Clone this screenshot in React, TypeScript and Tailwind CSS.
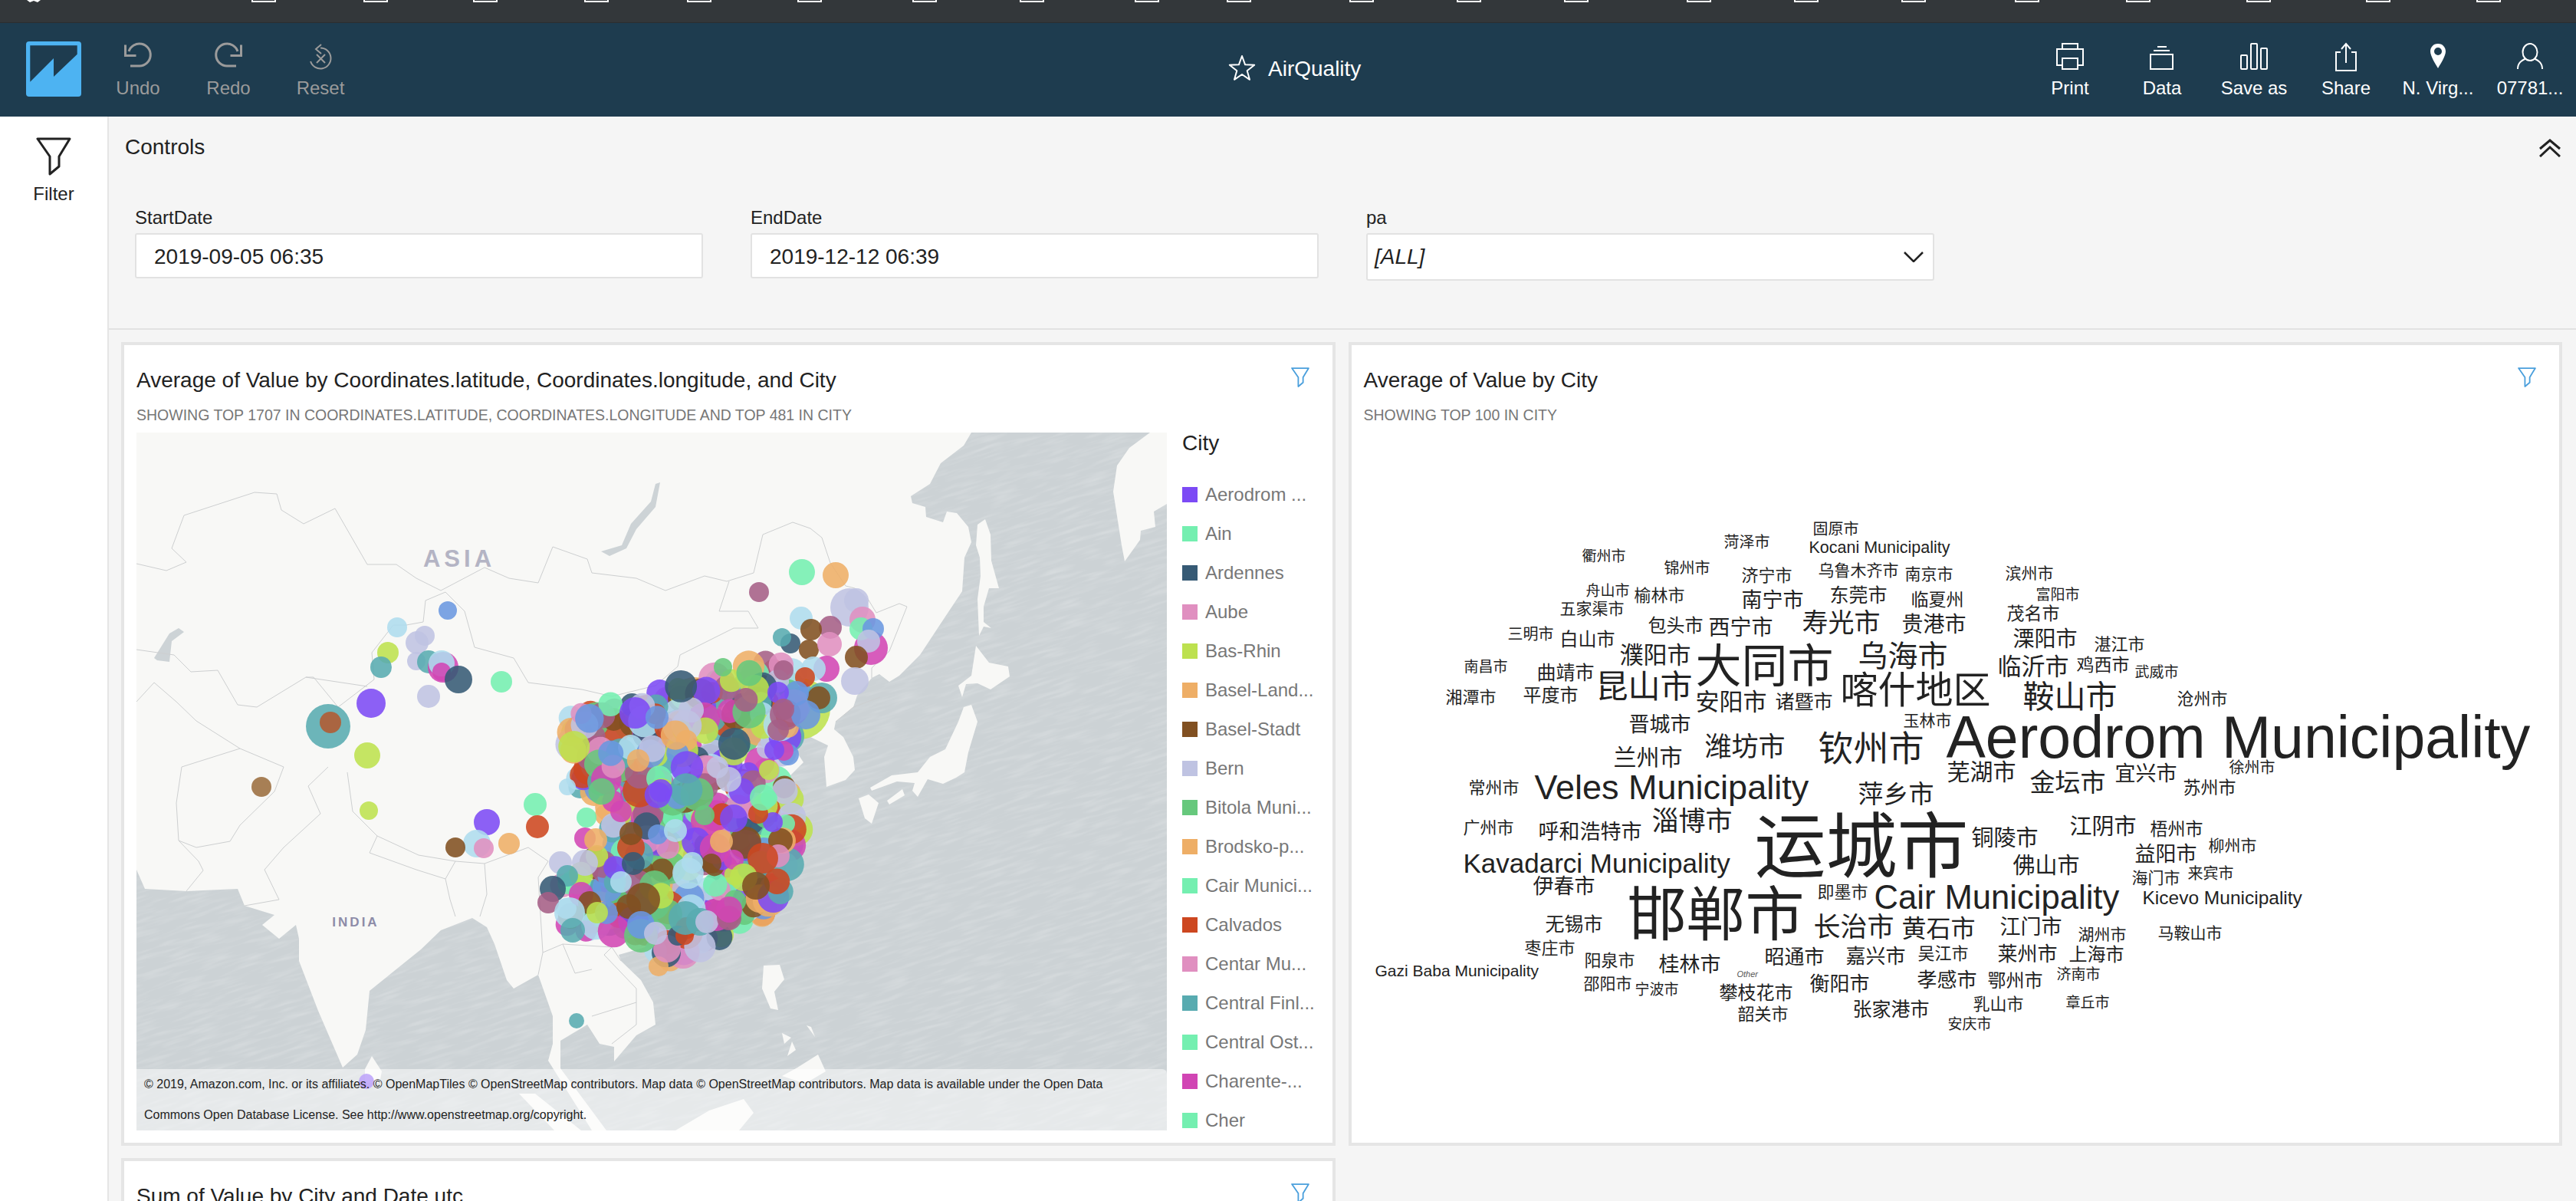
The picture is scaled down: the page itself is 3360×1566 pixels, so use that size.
import React from "react";

const PURPLE = "#7c4af5", MINT = "#74efb0", NAVY = "#365a75", PINK = "#e08fc0", LIME = "#bde14f",
  ORANGE = "#eeae66", BROWN = "#815021", LAVENDER = "#bfc3e2", GREEN = "#66c87c", RED = "#cd4720",
  TEAL = "#58abb0", MAGENTA = "#d145b4", BLUE = "#6a97e0", SKY = "#aedcee", MAUVE = "#a55e86";

const legend: [string, string][] = [
  ["Aerodrom ...", PURPLE], ["Ain", MINT], ["Ardennes", NAVY], ["Aube", PINK], ["Bas-Rhin", LIME],
  ["Basel-Land...", ORANGE], ["Basel-Stadt", BROWN], ["Bern", LAVENDER], ["Bitola Muni...", GREEN],
  ["Brodsko-p...", ORANGE], ["Cair Munici...", MINT], ["Calvados", RED], ["Centar Mu...", PINK],
  ["Central Finl...", TEAL], ["Central Ost...", MINT], ["Charente-...", MAGENTA], ["Cher", MINT],
];

// x, centre y (page pixels), font size
const words: [string, number, number, number][] = [
  ["固原市", 2364, 690, 20], ["Kocani Municipality", 2359, 715, 21.5], ["菏泽市", 2248, 707, 20], ["衢州市", 2063, 725, 19],
  ["锦州市", 2170, 741, 20], ["济宁市", 2271, 751, 22], ["乌鲁木齐市", 2371, 743, 21], ["南京市", 2484, 748, 21],
  ["舟山市", 2068, 770, 19], ["榆林市", 2131, 777, 22], ["东莞市", 2386, 776, 25], ["南宁市", 2271, 783, 27],
  ["临夏州", 2492, 782, 23], ["五家渠市", 2034, 793, 21], ["三明市", 1966, 827, 20], ["白山市", 2034, 834, 24],
  ["包头市", 2149, 816, 24], ["西宁市", 2228, 819, 28], ["寿光市", 2350, 812, 34], ["贵港市", 2480, 815, 28],
  ["濮阳市", 2112, 854, 31], ["大同市", 2211, 870, 60], ["乌海市", 2423, 855, 39], ["南昌市", 1909, 869, 19],
  ["曲靖市", 2004, 877, 25], ["昆山市", 2081, 896, 42], ["喀什地区", 2400, 900, 49], ["湘潭市", 1885, 910, 22],
  ["平度市", 1986, 907, 24], ["安阳市", 2211, 915, 31], ["诸暨市", 2315, 915, 25], ["玉林市", 2482, 939, 21],
  ["晋城市", 2124, 945, 27], ["潍坊市", 2223, 973, 35], ["钦州市", 2371, 976, 46], ["兰州市", 2104, 988, 30],
  ["Aerodrom Municipality", 2538, 961, 77], ["芜湖市", 2539, 1007, 30], ["金坛市", 2647, 1020, 33], ["宜兴市", 2758, 1009, 27],
  ["徐州市", 2907, 1001, 20], ["苏州市", 2847, 1027, 23], ["常州市", 1915, 1028, 22], ["Veles Municipality", 2001, 1026, 45],
  ["萍乡市", 2423, 1035, 33], ["淄博市", 2154, 1070, 35], ["运城市", 2288, 1105, 93], ["广州市", 1908, 1080, 22],
  ["呼和浩特市", 2006, 1085, 27], ["铜陵市", 2571, 1093, 29], ["江阴市", 2699, 1078, 29], ["梧州市", 2804, 1081, 23],
  ["柳州市", 2880, 1102, 21], ["益阳市", 2784, 1114, 27], ["佛山市", 2625, 1129, 29], ["海门市", 2780, 1144, 21],
  ["来宾市", 2853, 1139, 20], ["Kavadarci Municipality", 1908, 1125, 35], ["伊春市", 1999, 1156, 27], ["邯郸市", 2122, 1193, 77],
  ["即墨市", 2370, 1164, 22], ["Cair Municipality", 2444, 1171, 43.6], ["Kicevo Municipality", 2794, 1171, 24.5], ["无锡市", 2015, 1205, 25],
  ["长治市", 2365, 1208, 35], ["黄石市", 2480, 1211, 32], ["江门市", 2608, 1209, 27], ["湖州市", 2710, 1218, 21],
  ["马鞍山市", 2814, 1216, 21], ["枣庄市", 1988, 1237, 22], ["阳泉市", 2066, 1253, 22], ["桂林市", 2163, 1258, 27],
  ["昭通市", 2301, 1248, 26], ["嘉兴市", 2407, 1247, 26], ["吴江市", 2501, 1244, 22], ["莱州市", 2605, 1244, 26],
  ["上海市", 2698, 1245, 24], ["Gazi Baba Municipality", 1793, 1265, 21], ["邵阳市", 2065, 1282, 21], ["宁波市", 2132, 1290, 19],
  ["衡阳市", 2360, 1283, 26], ["孝感市", 2500, 1278, 26], ["鄂州市", 2592, 1279, 24], ["济南市", 2682, 1270, 19],
  ["攀枝花市", 2242, 1295, 24], ["韶关市", 2266, 1323, 22], ["张家港市", 2416, 1316, 25], ["乳山市", 2573, 1310, 22],
  ["章丘市", 2694, 1307, 19], ["安庆市", 2540, 1335, 19], ["滨州市", 2615, 747, 21], ["富阳市", 2655, 775, 19],
  ["茂名市", 2617, 800, 23], ["溧阳市", 2625, 834, 28], ["湛江市", 2731, 841, 22], ["临沂市", 2605, 869, 31],
  ["鸡西市", 2708, 867, 23], ["武威市", 2784, 876, 19], ["鞍山市", 2638, 909, 41], ["沧州市", 2839, 912, 22],
];

const seaEast = "1089,0 1079,17 1049,40 1035,67 1010,83 1012,92 1029,97 1030,110 1052,117 1057,103 1070,105 1085,123 1089,143 1080,163 1077,207 1055,240 1022,290 995,317 982,325 969,315 959,320 940,343 935,358 912,377 910,387 922,397 935,423 937,440 925,453 900,462 897,423 902,408 879,397 850,400 870,430 840,460 862,508 856,541 824,595 805,616 747,649 709,667 671,669 629,681 632,689 658,714 674,743 677,772 652,786 623,820 623,801 604,797 588,772 553,793 553,829 613,910 1344,910 1344,0";
const seaWest = "0,570 11,595 65,598 132,595 141,617 180,629 164,642 186,660 208,642 212,660 212,689 237,754 269,828 288,811 299,779 304,728 371,674 397,649 438,633 457,645 467,667 483,714 492,725 524,707 543,761 543,797 537,819 594,910 0,910";

const islands = [
  "1097,120 1107,113 1114,133 1115,167 1125,203 1112,203 1105,227 1105,247 1115,255 1105,253 1099,265 1097,217 1101,187 1100,163 1095,147",
  "1095,278 1112,300 1137,305 1139,318 1114,335 1097,327 1082,328 1077,345 1072,330 1089,317",
  "1079,358 1089,355 1097,377 1085,417 1080,443 1069,450 1052,458 1032,452 1019,475 1012,467 1015,457 992,455 959,467 957,463 985,447 1019,443 1035,423 1055,413 1072,377",
  "979,480 999,465 1002,473 982,485",
  "942,477 955,472 968,483 959,510 950,503",
  "1322,0 1295,20 1279,43 1274,77 1285,147 1289,168 1309,140 1310,128 1329,123 1327,103 1344,93 1344,0",
  "835,599 838,609 825,643 822,633 822,616",
  "818,695 839,694 845,713 832,729 837,753 827,751 816,725",
  "842,839 862,828 889,811 899,833 872,849",
  "874,773 885,788 880,775",
  "842,783 854,789 845,797",
  "855,794 849,813 860,805",
  "703,910 747,884 792,869 805,887 786,910",
  "499,862 520,862 580,910 545,910",
  "307,813 320,833 317,848 298,848 298,830",
];

const borders = [
  "0,171 39,180 65,169 46,151 62,108 154,78 183,80 189,101 218,119 259,99 301,172 339,172 365,190 397,206 454,176 486,190 524,196 543,149 588,165 594,183 652,190 690,206 741,187 770,194 805,183 817,133 856,117 879,125 894,137 905,170 925,200 937,203 954,217 965,235 995,223 1005,227 982,285 959,307 959,320",
  "403,208 377,219 374,247 352,251 335,251 307,287 310,322 263,358 231,319 221,319 157,358 132,355 106,310 71,312 49,290 0,283",
  "301,331 221,319",
  "403,208 428,233 441,280 492,294 511,326 581,335 620,344 677,330 706,305 709,290 779,255 811,255 798,233 760,233 773,194",
  "0,351 23,326 52,351 78,376 135,412 192,436 180,468 135,512 122,533 78,541 55,532 52,483 59,436 135,412",
  "55,532 81,559 87,571 65,598",
  "250,436 224,461 240,497 192,541 167,570 186,609 141,617",
  "275,443 282,494 314,526 368,551 416,559 454,562 511,541 537,559 524,580",
  "314,526 304,548 365,570 403,582 416,559",
  "403,582 409,609 416,631",
  "454,562 457,602 448,631",
  "524,580 530,678 556,667 620,671 610,681 652,725 652,772 620,797",
  "530,678 524,707",
  "594,700 572,705 556,667",
  "594,761 652,743",
  "620,671 632,689",
  "912,377 935,358 970,345",
];

const baseDots: [number, number, number, string][] = [
  [865, 360, 40, LIME], [728, 351, 32, ORANGE], [709, 355, 28, RED], [802, 333, 25, GREEN], [655, 376, 25, MAUVE], [665, 362, 20, RED],
  [930, 228, 25, LAVENDER], [939, 219, 16, LAVENDER],
];

const topDots: [number, number, number, string][] = [
  [406, 232, 12, BLUE], [340, 254, 13, SKY], [376, 265, 13, LAVENDER], [366, 274, 15, LAVENDER], [328, 287, 14, LIME], [319, 306, 14, TEAL],
  [365, 298, 12, LAVENDER], [381, 299, 15, TEAL], [400, 306, 20, MAGENTA], [398, 301, 17, SKY], [398, 312, 12, MAGENTA], [420, 322, 18, NAVY],
  [476, 325, 14, MINT], [381, 344, 15, LAVENDER], [306, 353, 19, PURPLE], [250, 383, 29, TEAL], [253, 378, 14, "#b35a30"], [301, 421, 17, LIME],
  [163, 462, 13, "#9b6d3f"], [303, 493, 12, LIME], [457, 508, 17, PURPLE], [520, 485, 15, MINT], [523, 514, 15, RED], [486, 536, 14, ORANGE],
  [444, 536, 18, SKY], [416, 541, 13, BROWN], [453, 542, 13, PINK], [574, 767, 10, TEAL], [300, 846, 10, PURPLE], [681, 696, 13, ORANGE],
  [692, 673, 18, PINK], [562, 462, 11, SKY], [587, 502, 13, MINT], [812, 208, 13, MAUVE], [868, 182, 17, MINT], [912, 186, 17, ORANGE],
  [867, 242, 15, SKY], [765, 306, 12, GREEN], [853, 275, 13, NAVY], [842, 267, 12, TEAL], [905, 254, 15, MAUVE], [880, 257, 14, BROWN],
  [877, 283, 13, BROWN], [904, 276, 16, PINK], [947, 244, 17, PINK], [958, 281, 22, MAGENTA], [945, 256, 15, MINT], [961, 256, 14, BLUE],
  [955, 272, 15, LAVENDER], [939, 293, 15, BROWN], [937, 324, 18, LAVENDER], [900, 308, 17, MAGENTA], [883, 308, 16, SKY], [872, 319, 13, RED],
  [844, 310, 13, MAUVE], [894, 346, 20, TEAL], [890, 346, 15, BROWN], [873, 368, 19, BLUE], [861, 340, 16, BLUE], [837, 339, 14, PURPLE], [844, 361, 14, MAUVE],
  [837, 388, 14, MAUVE], [850, 420, 14, BLUE], [844, 415, 13, MAGENTA], [832, 414, 13, PURPLE], [825, 440, 13, LIME], [825, 477, 11, MINT],
  [847, 510, 12, MINT], [843, 532, 17, ORANGE], [840, 532, 16, BROWN], [837, 552, 15, PINK], [817, 555, 20, RED], [830, 508, 13, PURPLE],
  [811, 497, 13, RED], [779, 503, 18, PURPLE], [741, 499, 13, GREEN], [817, 476, 17, MINT], [684, 467, 15, PURPLE], [632, 494, 14, MAGENTA],
  [645, 541, 18, RED], [645, 523, 15, BROWN], [693, 541, 15, PINK], [680, 524, 13, BLUE], [703, 519, 15, SKY], [763, 533, 15, ORANGE],
  [750, 562, 13, BROWN], [779, 557, 13, MAGENTA], [632, 586, 14, SKY], [648, 562, 15, NAVY], [725, 561, 14, SKY], [585, 529, 14, MAGENTA],
  [599, 531, 15, ORANGE], [553, 561, 15, LAVENDER], [585, 561, 17, LAVENDER], [562, 578, 14, TEAL], [543, 595, 17, NAVY], [537, 613, 14, MAUVE],
  [580, 602, 16, MAGENTA], [591, 613, 15, BROWN], [613, 626, 15, BLUE], [601, 626, 14, LIME], [565, 626, 20, SKY], [569, 649, 16, TEAL],
  [661, 609, 22, BROWN], [642, 618, 16, BROWN], [658, 656, 22, GREEN], [658, 642, 18, BLUE], [677, 653, 15, LAVENDER], [706, 656, 13, NAVY],
  [715, 656, 12, RED], [716, 633, 22, TEAL], [735, 638, 18, TEAL], [744, 638, 15, LAVENDER], [773, 633, 16, MAUVE], [773, 622, 17, MAGENTA],
  [792, 580, 18, LIME], [808, 591, 18, BROWN],
];

// the dense cluster over eastern China, too many points to list one by one
function inCluster(x: number, y: number) {
  const poly = [[619, 347], [743, 325], [829, 282], [872, 336], [851, 400], [829, 432], [866, 486], [861, 550], [829, 625], [765, 657], [690, 690], [647, 657], [561, 647], [551, 593], [626, 529], [561, 443], [561, 368]];
  let inside = false;
  for (let i = 0, j = poly.length - 1; i < poly.length; j = i++) {
    const [xi, yi] = poly[i], [xj, yj] = poly[j];
    if (yi > y !== yj > y && x < ((xj - xi) * (y - yi)) / (yj - yi) + xi) inside = !inside;
  }
  return inside;
}

const palette = [PURPLE, MINT, NAVY, PINK, LIME, ORANGE, BROWN, LAVENDER, GREEN, RED, TEAL, MAGENTA, BLUE, SKY, MAUVE];
const clusterDots: [number, number, number, string][] = [];
let seed = 4711;
const rnd = () => {
  seed = (seed * 1664525 + 1013904223) % 4294967296;
  return seed / 4294967296;
};
while (clusterDots.length < 520) {
  const x = 545 + rnd() * 330, y = 280 + rnd() * 415;
  if (inCluster(x, y)) clusterDots.push([x, y, 13 + rnd() * 9, palette[Math.floor(rnd() * palette.length)]]);
}

const Funnel = ({ className, strokeWidth = 3 }: { className: string; strokeWidth?: number }) => (
  <svg viewBox="0 0 46 50" className={className} fill="none" stroke="currentColor" strokeWidth={strokeWidth} strokeLinejoin="round">
    <path d="M2 2 H44 L30 25 V38 L18 48 V25 Z" />
  </svg>
);

const HeaderButton = ({ label, dim, width = "w-[120px]", children }: { label: string; dim?: boolean; width?: string; children: React.ReactNode }) => (
  <div className={`flex flex-col items-center ${width} ${dim ? "text-[#9b9b9b]" : "text-white"}`}>
    <svg viewBox="0 0 40 40" className="w-10 h-10" fill="none" stroke="currentColor" strokeWidth={2}>
      {children}
    </svg>
    <span className="text-2xl leading-7 mt-[7px] whitespace-nowrap">{label}</span>
  </div>
);

const WorldMap = () => (
  <svg viewBox="0 0 1344 910" className="w-[1344px] h-[910px] block">
    <defs>
      <clipPath id="seaClip">
        <polygon points={seaEast} />
        <polygon points={seaWest} />
      </clipPath>
      <filter id="waves" x="0" y="0" width="100%" height="100%">
        <feTurbulence type="fractalNoise" baseFrequency="0.025 0.2" numOctaves={2} seed={4} />
        <feColorMatrix values="0 0 0 0 1  0 0 0 0 1  0 0 0 0 1  0.45 0 0 0 -0.2" />
      </filter>
    </defs>
    <rect width="1344" height="910" fill="#f8f8f6" />
    <polygon points={seaEast} fill="#ccd2d5" />
    <polygon points={seaWest} fill="#ccd2d5" />
    <g clipPath="url(#seaClip)">
      <rect x="-400" y="-400" width="2200" height="1800" filter="url(#waves)" transform="rotate(-17 672 455)" />
    </g>
    {islands.map((p) => <polygon key={p} points={p} fill="#f8f8f6" />)}
    <polygon points="23,294 43,262 55,255 62,260 46,272 43,299 27,297" fill="#cdd3d6" />
    <polygon points="683,65 677,97 652,126 639,151 617,161 606,155 633,147 645,119 671,90 677,67" fill="#cdd3d6" />
    {borders.map((p) => <polyline key={p} points={p} fill="none" stroke="#cdcfd0" strokeWidth={1} />)}
    <text x="421" y="175" textAnchor="middle" fontSize="31" fontWeight="700" letterSpacing="5" fill="#b4b4c4">ASIA</text>
    <text x="286" y="644" textAnchor="middle" fontSize="17" fontWeight="700" letterSpacing="3" fill="#8d8ca8">INDIA</text>
    {[...baseDots, ...clusterDots, ...topDots].map(([x, y, r, c], i) => (
      <circle key={i} cx={x} cy={y} r={r} fill={c} opacity={0.88} />
    ))}
  </svg>
);

const Card = ({ title, caption, children }: { title: string; caption?: string; children?: React.ReactNode }) => (
  <div className="relative h-[1048px] bg-white border-4 border-[#e5e5e5] px-4 pt-[30px]">
    <div className="text-[28px] leading-8 text-[#222]">{title}</div>
    {caption && <div className="text-[19.5px] leading-6 mt-[17px] text-[#777] whitespace-nowrap">{caption}</div>}
    <Funnel className="absolute top-[29px] right-[30px] w-6 h-[26px] text-[#4a9fdc]" strokeWidth={3.5} />
    {children}
  </div>
);

const DateField = ({ label, value }: { label: string; value: string }) => (
  <div className="w-[741px]">
    <div className="text-2xl leading-7 text-[#222] mb-[6px]">{label}</div>
    <div className="h-[59px] bg-white border-2 border-[#e2e2e2] rounded-[3px] pl-[23px] text-[28px] leading-[57px] text-[#222]">{value}</div>
  </div>
);

export default function App() {
  return (
    <div className="w-[3360px] h-[1566px] overflow-hidden bg-[#f5f5f5] [font-family:'Liberation_Sans','Noto_Sans_CJK_SC',sans-serif]">
      {/* browser bookmark bar, cut off at the top of the capture */}
      <div className="relative h-[30px] bg-[#33373a] border-b border-[#2a2d30]">
        <svg viewBox="0 0 18 4" className="absolute left-[35px] top-0 w-[18px] h-1"><path d="M0 0 H18 L14 3 L9 1 L4 3 Z" fill="#fff" /></svg>
        {[328, 474, 617, 762, 896, 1040, 1190, 1330, 1480, 1600, 1760, 1900, 2040, 2200, 2340, 2480, 2628, 2773, 2930, 3086, 3230].map((x) => (
          <div key={x} className="absolute top-0 w-[32px] h-[3px] border-2 border-t-0 border-white" style={{ left: x }} />
        ))}
      </div>

      <header className="h-[122px] bg-[#1e3c4f] flex items-start pt-[24px]">
        <div className="w-[121px] pl-[34px] shrink-0">
          <svg viewBox="0 0 72 72" className="w-[72px] h-[72px]">
            <rect width="72" height="72" rx="4" fill="#4db3f2" />
            <polygon points="5.3,5.3 66.7,5.3 66.7,16.7 36,46 36,22 5.3,52.7" fill="#1e3c4f" />
          </svg>
        </div>
        <HeaderButton label="Undo" dim width="w-[118px]">
          <polyline points="3.5,4.5 3.5,18.5 17.5,18.5" strokeWidth={3} />
          <path d="M10 32 H22 A14.5 14.5 0 1 0 8 13" strokeWidth={3} />
        </HeaderButton>
        <HeaderButton label="Redo" dim width="w-[118px]">
          <g transform="matrix(-1 0 0 1 40 0)">
            <polyline points="3.5,4.5 3.5,18.5 17.5,18.5" strokeWidth={3} />
            <path d="M10 32 H22 A14.5 14.5 0 1 0 8 13" strokeWidth={3} />
          </g>
        </HeaderButton>
        <HeaderButton label="Reset" dim width="w-[122px]">
          <polyline points="21,4 14,10 21,16" />
          <path d="M20 8.5 A13.5 13.5 0 1 1 7.1 26" />
          <path d="M15 17 L26 28 M26 17 L15 28" />
        </HeaderButton>

        <div className="ml-[1121px] flex items-center h-[72px]">
          <svg viewBox="0 0 40 40" className="w-10 h-10" fill="none" stroke="#fff" strokeWidth={2} strokeLinejoin="round">
            <polygon points="20,3 24.1,14.3 36.2,14.7 26.7,22.2 30,33.8 20,27 10,33.8 13.3,22.2 3.8,14.7 15.9,14.3" />
          </svg>
          <span className="ml-[14px] text-[28px] text-white">AirQuality</span>
        </div>

        <div className="ml-auto flex">
          <HeaderButton label="Print">
            <rect x="10" y="3" width="20" height="7" />
            <path d="M10 31 H3 V10 H37 V31 H30" />
            <rect x="10" y="22" width="20" height="14" />
          </HeaderButton>
          <HeaderButton label="Data">
            <rect x="5" y="17" width="29" height="19" />
            <path d="M9 12 H30 M14 7 H26" />
          </HeaderButton>
          <HeaderButton label="Save as">
            <rect x="3" y="18" width="8" height="18" rx="1" />
            <rect x="16" y="3" width="8" height="33" rx="1" />
            <rect x="29" y="9" width="8" height="27" rx="1" />
          </HeaderButton>
          <HeaderButton label="Share">
            <path d="M13 14 H7 V38 H33 V14 H27" />
            <path d="M20 28 V3 M14 10 L20 3 L26 10" />
          </HeaderButton>
          <HeaderButton label="N. Virg...">
            <path fillRule="evenodd" stroke="none" fill="#fff" d="M20 3 C13.5 3 10 8 10 13 C10 19 17 30 20 35 C23 30 30 19 30 13 C30 8 26.5 3 20 3 Z M20 8 A5 5 0 1 1 20 18 A5 5 0 1 1 20 8 Z" />
          </HeaderButton>
          <HeaderButton label="07781...">
            <ellipse cx="20" cy="14" rx="9.5" ry="11" />
            <path d="M4 36 C4 28 9 25 14 22.5 M36 36 C36 28 31 25 26 22.5" />
          </HeaderButton>
        </div>
      </header>

      <div className="flex h-[1414px]">
        <aside className="w-[142px] shrink-0 bg-white border-r-2 border-[#e5e5e5] flex flex-col items-center pt-[27px]">
          <Funnel className="w-[46px] h-[50px] text-[#222]" />
          <span className="text-2xl leading-7 mt-[10px] text-[#222]">Filter</span>
        </aside>

        <main className="flex-1 min-w-0">
          <section className="relative h-[278px] border-b-2 border-[#e2e2e2] pt-6">
            <div className="pl-[21px] text-[28px] leading-8 text-[#222]">Controls</div>
            <svg viewBox="0 0 28 24" className="absolute right-[20px] top-[29px] w-7 h-6" fill="none" stroke="#222" strokeWidth={3}>
              <path d="M1 13 L14 2 L27 13 M1 23 L14 11 L27 23" />
            </svg>
            <div className="mt-[62px] pl-[34px] flex items-start gap-[62px]">
              <DateField label="StartDate" value="2019-09-05 06:35" />
              <DateField label="EndDate" value="2019-12-12 06:39" />
              <div className="w-[741px]">
                <div className="text-2xl leading-7 text-[#222] mb-[6px]">pa</div>
                <div className="h-[62px] bg-white border-2 border-[#e2e2e2] rounded-[3px] pl-[9px] pr-[12px] flex items-center justify-between">
                  <span className="text-[28px] italic text-[#222]">[ALL]</span>
                  <svg viewBox="0 0 26 14" className="w-[26px] h-[14px]" fill="none" stroke="#222" strokeWidth={2.5}>
                    <path d="M1 1 L13 13 L25 1" />
                  </svg>
                </div>
              </div>
            </div>
          </section>

          <div className="grid grid-cols-2 gap-x-[17px] gap-y-4 pl-4 pr-[18px] pt-4">
            <Card title="Average of Value by Coordinates.latitude, Coordinates.longitude, and City" caption="SHOWING TOP 1707 IN COORDINATES.LATITUDE, COORDINATES.LONGITUDE AND TOP 481 IN CITY">
              <div className="flex mt-[11px]">
                <div className="relative w-[1344px] h-[910px] shrink-0">
                  <WorldMap />
                  <div className="absolute inset-x-0 bottom-0 h-[80px] bg-white/50 rounded-tr-md pl-[10px] text-[16px] leading-[40px] text-[#222] whitespace-nowrap">
                    <div>© 2019, Amazon.com, Inc. or its affiliates. © OpenMapTiles © OpenStreetMap contributors. Map data © OpenStreetMap contributors. Map data is available under the Open Data</div>
                    <div>Commons Open Database License. See http://www.openstreetmap.org/copyright.</div>
                  </div>
                </div>
                <div className="ml-5">
                  <div className="text-[28px] leading-8 text-[#222] -mt-[2px] mb-[25px]">City</div>
                  {legend.map(([name, color]) => (
                    <div key={name} className="flex items-center h-[51px] whitespace-nowrap">
                      <span className="w-5 h-5 shrink-0" style={{ background: color }} />
                      <span className="ml-[10px] text-2xl text-[#777]">{name}</span>
                    </div>
                  ))}
                </div>
              </div>
            </Card>

            <Card title="Average of Value by City" caption="SHOWING TOP 100 IN CITY">
              <div className="relative mt-[11px] h-[910px]">
                {words.map(([text, x, y, size]) => (
                  <span
                    key={text}
                    className="absolute leading-none whitespace-nowrap text-[#222] -translate-y-1/2"
                    style={{ left: x - 1778, top: y - 564, fontSize: size }}
                  >
                    {text}
                  </span>
                ))}
                <span className="absolute left-[487px] top-[706px] -translate-y-1/2 text-[11px] leading-none italic text-[#555]">Other</span>
              </div>
            </Card>

            <Card title="Sum of Value by City and Date utc" />
          </div>
        </main>
      </div>
    </div>
  );
}
